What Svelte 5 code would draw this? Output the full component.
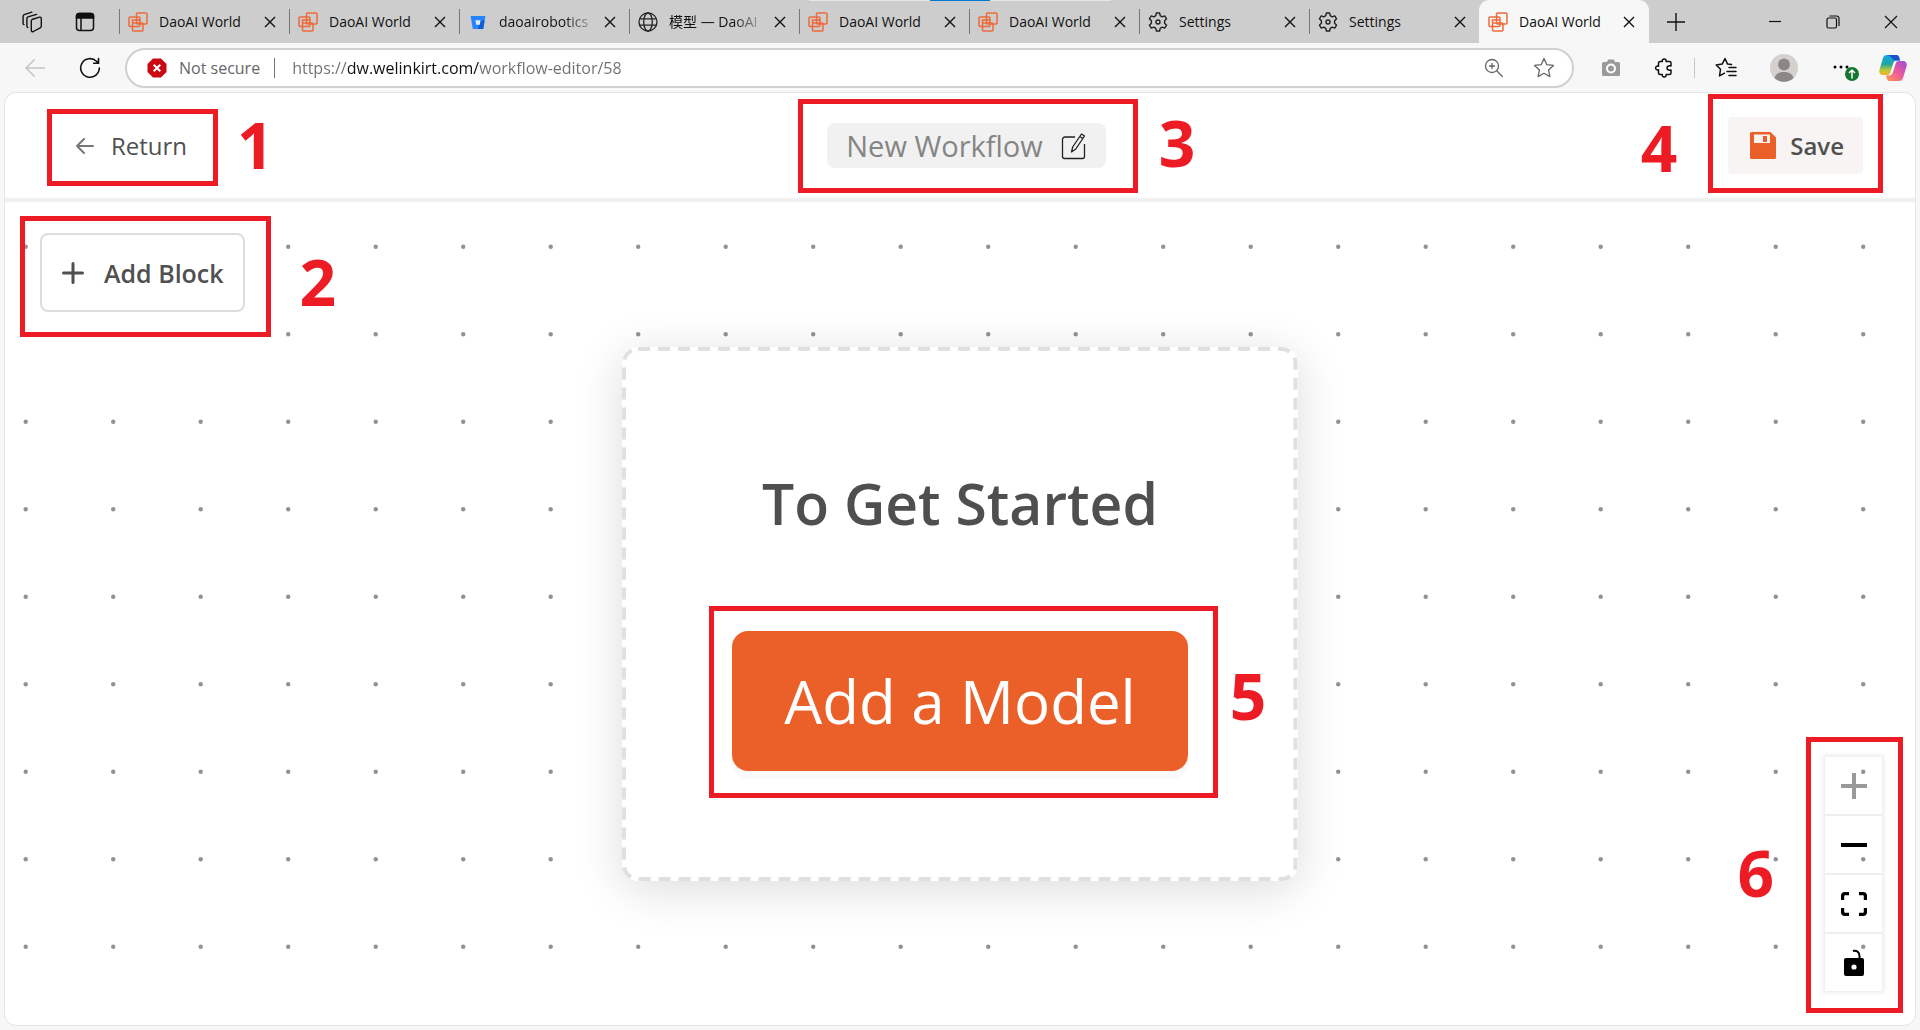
<script>
  const tabs = [
    { icon: 'dao', title: 'DaoAI World' },
    { icon: 'dao', title: 'DaoAI World' },
    { icon: 'bucket', title: 'daoairobotics', fade: true },
    { icon: 'globe', title: '模型 — DaoAI', fade: true },
    { icon: 'dao', title: 'DaoAI World' },
    { icon: 'dao', title: 'DaoAI World' },
    { icon: 'gear', title: 'Settings' },
    { icon: 'gear', title: 'Settings' },
    { icon: 'dao', title: 'DaoAI World', active: true }
  ];
  let url = $state('https://dw.welinkirt.com/workflow-editor/58');
</script>

{#snippet favicon(name)}
  {#if name === 'dao'}
    <svg class="fav" viewBox="0 0 20 20" fill="none" stroke="#ee6a3a" stroke-width="1.5">
      <rect x="1" y="5" width="11" height="9.5" rx="1" />
      <rect x="8.500" y="1" width="10.500" height="11" rx="1" />
      <rect x="4.500" y="11" width="10.500" height="8" rx="1" />
      <path d="M4.500 11V8h8" />
    </svg>
  {:else if name === 'bucket'}
    <svg class="fav" viewBox="0 0 20 20">
      <path d="M2.600 4h14.800l-2.200 13H4.800z" fill="#2684ff" />
      <path d="M12 8.500h4.600L15.200 17H10z" fill="#0f5bd8" />
      <path d="M7.400 8.200h5.200l-.8 4.600H8.200z" fill="#dfe9f8" />
    </svg>
  {:else if name === 'globe'}
    <svg class="fav" viewBox="0 0 20 20" fill="none" stroke="#222" stroke-width="1.3">
      <circle cx="10" cy="10" r="9" />
      <ellipse cx="10" cy="10" rx="4.300" ry="9" />
      <path d="M1.800 6.800h16.400M1.800 13.200h16.400" />
    </svg>
  {:else}
    <svg class="fav" viewBox="0 0 20 20" fill="none" stroke="#222" stroke-width="1.400" stroke-linejoin="round">
      <path d="M8.400 1h3.200l.6 2.700 1.900 1.100 2.600-.9 1.900 2.900-2 1.900v2.600l2 1.900-1.900 2.900-2.600-.9-1.900 1.100-.6 2.700H8.400l-.6-2.700-1.900-1.100-2.600.9-1.900-2.900 2-1.900V8.700l-2-1.900 1.900-2.900 2.600.9 1.900-1.100z" />
      <circle cx="10" cy="10" r="2" />
    </svg>
  {/if}
{/snippet}

{#snippet cross()}
  <svg width="12" height="12" viewBox="0 0 12 12" stroke="#111" stroke-width="1.400"><path d="M1 1l10 10M11 1L1 11" /></svg>
{/snippet}

<div class="browser">
  <div class="tabstrip">
    <div class="snapbar"><i></i></div>
    <div class="lead">
      <button class="ico" aria-label="Workspaces">
        <svg width="22" height="22" viewBox="0 0 22 22" fill="none" stroke="#111" stroke-width="1.400" stroke-linejoin="round" stroke-linecap="round">
          <path d="M11 8.500l7.500-2.300c1-.3 1.800.2 1.800 1.200v7.800c0 .8-.4 1.300-1.100 1.600l-6.900 3.700c-1 .5-2 0-2-1.100v-9.100c0-.9.2-1.500.7-1.800z" />
          <path d="M6.800 16.500c-.6-.1-.9-.5-.9-1.200V7.600c0-.8.400-1.400 1.100-1.700l8.600-2.500" />
          <path d="M3 13.600c-.6-.1-.9-.5-.9-1.200V5.400c0-.8.400-1.400 1.100-1.700l7.600-2.500" />
        </svg>
      </button>
      <button class="ico" aria-label="Tab actions menu">
        <svg width="20" height="20" viewBox="0 0 20 20" fill="none" stroke="#111" stroke-width="1.500">
          <rect x="1.500" y="1.500" width="17" height="17" rx="3" />
          <path d="M1.500 6V4a2.500 2.500 0 0 1 2.500-2.500h12A2.500 2.500 0 0 1 18.500 4v2z" fill="#111" />
          <path d="M6 6v12" />
        </svg>
      </button>
    </div>
    {#each tabs as tab}
      <div class="tab" class:active={tab.active}>
        <button class="tab-main">
          {@render favicon(tab.icon)}
          <span class="tab-title" class:fade={tab.fade}>{tab.title}</span>
        </button>
        <button class="ico close" aria-label="Close tab">{@render cross()}</button>
      </div>
    {/each}
    <button class="ico newtab" aria-label="New tab">
      <svg width="18" height="18" viewBox="0 0 18 18" stroke="#111" stroke-width="1.400"><path d="M9 0v18M0 9h18" /></svg>
    </button>
    <div class="winctl">
      <button class="ico" aria-label="Minimize">
        <svg width="14" height="14" viewBox="0 0 14 14" stroke="#111" stroke-width="1.200"><path d="M1 6.500h12" /></svg>
      </button>
      <button class="ico" aria-label="Restore">
        <svg width="14" height="14" viewBox="0 0 14 14" fill="none" stroke="#111" stroke-width="1.200">
          <rect x="1" y="3" width="9.500" height="10" rx="1.500" />
          <path d="M3.500 1h7a2.500 2.500 0 0 1 2.500 2.500V11" />
        </svg>
      </button>
      <button class="ico" aria-label="Close window">
        <svg width="14" height="14" viewBox="0 0 14 14" stroke="#111" stroke-width="1.200"><path d="M1 1l12 12M13 1L1 13" /></svg>
      </button>
    </div>
  </div>

  <div class="toolbar">
    <button class="ico" aria-label="Back">
      <svg width="22" height="20" viewBox="0 0 22 20" fill="none" stroke="#c4c4c4" stroke-width="1.500"><path d="M21 10H2M10.500 1.500L2 10l8.500 8.500" /></svg>
    </button>
    <button class="ico reload" aria-label="Refresh">
      <svg width="22" height="22" viewBox="0 0 22 22" fill="none" stroke="#111" stroke-width="1.600" stroke-linecap="round"><path d="M20.300 11a9.300 9.300 0 1 1-2.800-6.700l1.800 1.800M19.500 1.500v4.800h-4.800" /></svg>
    </button>
    <div class="omnibox">
      <button class="security">
        <svg width="20" height="20" viewBox="0 0 20 20">
          <path d="M6 .5h8L19.500 6v8L14 19.500H6L.5 14V6z" fill="#c90a12" />
          <path d="M6.700 6.700l6.600 6.600M13.300 6.700l-6.600 6.600" stroke="#fff" stroke-width="2" />
        </svg>
        Not secure
      </button>
      <input class="url" aria-label="Address" bind:value={url} />
      <button class="ico" aria-label="Zoom">
        <svg width="20" height="20" viewBox="0 0 20 20" fill="none" stroke="#666" stroke-width="1.300"><circle cx="8" cy="8" r="6.500" /><path d="M12.700 12.700l6 6M8 5v6M5 8h6" /></svg>
      </button>
      <button class="ico star" aria-label="Add to favorites">
        <svg width="22" height="22" viewBox="0 0 22 22" fill="none" stroke="#666" stroke-width="1.300" stroke-linejoin="round"><path d="M11 1.500l2.800 6.200 6.700.7-5 4.500 1.400 6.700L11 16.200l-5.900 3.400 1.400-6.700-5-4.500 6.700-.7z" /></svg>
      </button>
    </div>
    <div class="tools">
      <button class="ico" aria-label="Screenshot">
        <svg width="20" height="20" viewBox="0 0 20 20" fill="#9a9a9a">
          <path d="M7 1.500h6l1 2.500h3.500A1.500 1.500 0 0 1 19 5.500v11a1.500 1.500 0 0 1-1.500 1.500h-15A1.500 1.500 0 0 1 1 16.500v-11A1.500 1.500 0 0 1 2.500 4H6z" />
          <circle cx="10" cy="10.500" r="4" fill="none" stroke="#fff" stroke-width="2" />
        </svg>
      </button>
      <button class="ico wide" aria-label="Extensions">
        <svg width="20" height="20" viewBox="0 0 20 20" fill="none" stroke="#111" stroke-width="1.500" stroke-linejoin="round">
          <path d="M6 3.500h2.300C8 2 8.800 1 10.200 1s2.200 1 1.900 2.500h3.400c.9 0 1.500.6 1.500 1.500v3c-2.800-.5-4 .5-4 2s1.200 2.500 4 2v3c0 .9-.6 1.500-1.500 1.500h-3.400c.3 1.500-.5 2.500-1.900 2.500s-2.200-1-1.900-2.500H6c-.9 0-1.500-.6-1.500-1.500v-3.200c-1.600.4-2.900-.4-2.900-1.800s1.300-2.200 2.900-1.800V5c0-.9.600-1.500 1.500-1.500z" />
        </svg>
      </button>
      <span class="bar"></span>
      <button class="ico" aria-label="Favorites">
        <svg width="22" height="22" viewBox="0 0 22 22" fill="none" stroke="#111" stroke-width="1.500" stroke-linejoin="round" stroke-linecap="round">
          <path d="M16.500 7.600l-3.900-.5L10 1.500 7.200 7.100l-6 .9 4.300 4.300-1 6.600 5-2.700M14 10.500h7M12 14.500h9M14 18.500h7" />
        </svg>
      </button>
      <button class="ico wide" aria-label="Profile">
        <svg width="28" height="28" viewBox="0 0 28 28">
          <circle cx="14" cy="14" r="14" fill="#d5d1ce" />
          <circle cx="14" cy="10.500" r="6" fill="#8d8885" />
          <path d="M4.500 24c1-4 4.500-6 9.500-6s8.500 2 9.500 6a14 14 0 0 1-19 0z" fill="#8d8885" />
        </svg>
      </button>
      <button class="ico wide" aria-label="Settings and more">
        <svg width="28" height="28" viewBox="0 0 28 28">
          <circle cx="4" cy="13" r="1.500" /><circle cx="10" cy="13" r="1.500" /><circle cx="16" cy="13" r="1.500" />
          <circle cx="21" cy="20" r="7" fill="#12762f" />
          <path d="M21 24.500v-8M18 19l3-3 3 3" fill="none" stroke="#fff" stroke-width="1.500" />
        </svg>
      </button>
      <button class="ico" aria-label="Copilot">
        <svg width="28" height="28" viewBox="0 0 28 28">
          <defs>
            <linearGradient id="cpA" x1="0" y1="0" x2="0" y2="1">
              <stop offset="0" stop-color="#12a5e8" /><stop offset=".45" stop-color="#1fa6a0" /><stop offset=".75" stop-color="#b7c83a" /><stop offset="1" stop-color="#f3b51f" />
            </linearGradient>
            <linearGradient id="cpB" x1="1" y1="0" x2="0" y2="1">
              <stop offset="0" stop-color="#9a4be0" /><stop offset=".5" stop-color="#ee5a9c" /><stop offset="1" stop-color="#fb9a4a" />
            </linearGradient>
          </defs>
          <path d="M8 1h9c2 0 2.700 1 3.200 2.600L21 6.500h-3c-2.200 0-3.200 1-3.900 3.200L11.500 18c-.6 2-1.400 3-3.500 3H4c-3 0-4.300-2.500-3.500-5.500L4 4c.7-2 1.800-3 4-3z" fill="url(#cpA)" />
          <path d="M9 1h8c2 0 2.700 1 3.200 2.600L21 6.500h-4.500C14 6.500 13 3 9 1z" fill="#1d4fd0" />
          <path d="M20 27h-9c-2 0-2.700-1-3.200-2.600L7 21.500h3c2.200 0 3.200-1 3.900-3.200L16.500 10c.6-2 1.400-3 3.500-3h4c3 0 4.300 2.500 3.500 5.500L24 24c-.7 2-1.800 3-4 3z" fill="url(#cpB)" />
        </svg>
      </button>
    </div>
  </div>

  <main class="page">
    <header class="head">
      <div class="spot">
        <a class="return" href="#back">
          <svg width="20" height="18" viewBox="0 0 20 18" fill="none" stroke="#777" stroke-width="2" stroke-linecap="round" stroke-linejoin="round"><path d="M18 9H2M9 2L2 9l7 7" /></svg>
          Return
        </a>
        <div class="mark m1"><b>1</b></div>
      </div>
      <div class="spot">
        <button class="name">
          New Workflow
          <svg width="26" height="28" viewBox="0 0 26 28" fill="none" stroke="#222" stroke-width="1.300" stroke-linejoin="round">
            <path d="M14 5H4a2.500 2.500 0 0 0-2.500 2.500v17A2 2 0 0 0 3.500 26.500h18a2 2 0 0 0 2-2V12" />
            <path d="M10.500 20l1.200-5L20.500 2l3 2L14.800 17z M18.800 4.500l3 2" />
          </svg>
        </button>
        <div class="mark m3"><b>3</b></div>
      </div>
      <div class="spot end">
        <button class="save">
          <svg width="26" height="27" viewBox="0 0 26 27">
            <path d="M1.500 0h19L26 5.500v20a1.500 1.500 0 0 1-1.500 1.500h-23A1.500 1.500 0 0 1 0 25.500v-24A1.500 1.500 0 0 1 1.500 0z" fill="#eb5f28" />
            <path d="M4 2.500h16v8.500H4z" fill="#f8f4f3" />
            <path d="M13 4h4v6h-4z" fill="#eb5f28" />
          </svg>
          Save
        </button>
        <div class="mark m4"><b>4</b></div>
      </div>
    </header>

    <section class="canvas">
      <div class="spot addspot">
        <button class="addblock">
          <svg width="22" height="22" viewBox="0 0 22 22" stroke="#4f4f4f" stroke-width="3" stroke-linecap="round"><path d="M11 1.500v19M1.500 11h19" /></svg>
          Add Block
        </button>
        <div class="mark m2"><b>2</b></div>
      </div>

      <div class="card">
        <svg class="outline" width="100%" height="100%" aria-hidden="true"><rect x="2" y="2" rx="14" /></svg>
        <h1>To Get Started</h1>
        <div class="spot">
          <button class="model">Add a Model</button>
          <div class="mark m5"><b>5</b></div>
        </div>
      </div>

      <div class="spot ctlspot">
        <div class="controls">
          <button aria-label="Zoom in" disabled>
            <svg width="26" height="26" viewBox="0 0 26 26" stroke="#999" stroke-width="4"><path d="M13 0v26M0 13h26" /></svg>
          </button>
          <button aria-label="Zoom out">
            <svg width="26" height="26" viewBox="0 0 26 26" stroke="#000" stroke-width="4"><path d="M0 13h26" /></svg>
          </button>
          <button aria-label="Fit view">
            <svg width="26" height="24" viewBox="0 0 26 24" fill="none" stroke="#000" stroke-width="3.200"><path d="M1.600 8V4a2.400 2.400 0 0 1 2.400-2.400h4M18 1.600h4A2.400 2.400 0 0 1 24.400 4v4M24.400 16v4a2.400 2.400 0 0 1-2.400 2.400h-4M8 22.400H4A2.400 2.400 0 0 1 1.600 20v-4" /></svg>
          </button>
          <button aria-label="Toggle interactivity">
            <svg width="20" height="28" viewBox="0 0 20 28">
              <path d="M9 2c4-1 6.500 1.500 6.500 5v3" fill="none" stroke="#000" stroke-width="2" />
              <path d="M2 9h16a2 2 0 0 1 2 2v14a2 2 0 0 1-2 2H2a2 2 0 0 1-2-2V11a2 2 0 0 1 2-2z" />
              <circle cx="10" cy="18" r="2.600" fill="#fff" />
            </svg>
          </button>
        </div>
        <div class="mark m6"><b>6</b></div>
      </div>

      <svg class="dots" width="100%" height="100%" aria-hidden="true">
        <defs>
          <pattern id="grid" x="-23" y="1" width="175" height="175" patternUnits="userSpaceOnUse">
            <g fill="#91919a">
              <circle cx="43.700" cy="43.700" r="2.200" /><circle cx="131.200" cy="43.700" r="2.200" />
              <circle cx="43.700" cy="131.200" r="2.200" /><circle cx="131.200" cy="131.200" r="2.200" />
            </g>
          </pattern>
        </defs>
        <rect width="100%" height="100%" fill="url(#grid)" />
      </svg>
    </section>
  </main>
</div>

<style>
  :global(body) { margin: 0; background: #f7f7f7; }
  .browser {
    display: flex; flex-direction: column; min-height: 100vh; box-sizing: border-box; padding-bottom: 4px;
    font-family: "Open Sans", "Noto Sans CJK SC", sans-serif; color: #505050;
  }
  .browser :global(*) { box-sizing: border-box; }
  button { font: inherit; color: inherit; background: none; border: 0; padding: 0; margin: 0; }
  svg { display: block; flex: none; }
  .ico { display: grid; place-items: center; flex: none; }

  .tabstrip { position: relative; display: flex; height: 43px; background: #cdcdcd; }
  .snapbar { position: absolute; top: 0; left: 50%; width: 302px; height: 1px; margin-left: -151px; background: #e6e6e6; }
  .snapbar i { display: block; width: 60px; height: 1px; margin: 0 auto; background: #0078d4; }
  .lead { display: flex; flex: none; width: 119px; padding-left: 21px; gap: 32px; }
  .tab { display: flex; flex: 0 1 170px; min-width: 0; align-items: center; position: relative; padding-right: 13px; }
  .tab::before { content: ""; position: absolute; left: 0; top: 9px; height: 25px; width: 1px; background: #777; }
  .tab.active { background: #f7f7f7; border-radius: 10px 10px 0 0; padding-right: 14px; }
  .tab.active::before { display: none; }
  .tab-main { display: flex; align-items: center; flex: 1; min-width: 0; height: 100%; padding-left: 9px; gap: 11px; color: #111; font-size: 14px; line-height: 20px; }
  .fav { width: 20px; height: 20px; }
  .tab-title { text-align: left; white-space: nowrap; }
  .fade { mask-image: linear-gradient(to right, #000 calc(100% - 24px), rgba(0, 0, 0, .3)); }
  .close { width: 12px; height: 20px; }
  .newtab { width: 54px; }
  .winctl { display: flex; margin-left: auto; padding-right: 22px; gap: 44px; }

  .toolbar { display: flex; align-items: center; height: 49px; padding: 0 13px 0 24px; flex: none; }
  .reload { margin: 0 24px 0 33px; }
  .omnibox { display: flex; flex: 1; min-width: 0; align-items: center; height: 40px; padding: 0 17px 0 20px; background: #fff; border: 2px solid #d0d0d0; border-radius: 20px; font-size: 16px; }
  .security { display: flex; align-items: center; gap: 12px; color: #666; padding-right: 14px; border-right: 1px solid #777; line-height: 20px; white-space: nowrap; }
  .url {
    flex: 1; min-width: 0; border: 0; outline: 0; padding: 0; margin-left: 17px; font: inherit;
    color: transparent; background: linear-gradient(to right, #707070 56px, #111 56px 187px, #707070 187px); background-clip: text;
  }
  .star { margin-left: 29px; }
  .tools { display: flex; align-items: center; gap: 20px; flex: none; padding-left: 27px; }
  .wide { margin-left: 13px; }
  .bar { width: 1px; height: 20px; background: #c8c8c8; }

  .page { display: flex; flex-direction: column; flex: 1; margin: 0 4px; background: #fff; border: 1px solid #e4e4e4; border-radius: 12px; }
  .head { display: grid; grid-template-columns: 1fr auto 1fr; align-items: center; height: 109px; padding: 0 52px 0 65px; border-bottom: 4px solid #f1f1f1; }
  .spot { position: relative; justify-self: start; z-index: 3; }
  .end { justify-self: end; }
  .return { display: flex; align-items: center; gap: 16px; height: 57px; padding: 0 5px; font-size: 24px; color: #505050; text-decoration: none; }
  .name { display: flex; align-items: center; gap: 18px; height: 45px; padding: 0 19px; background: #f1f1f1; border-radius: 8px; font-size: 29px; line-height: 44px; color: #858585; }
  .save { display: flex; align-items: center; gap: 14px; height: 57px; padding: 0 19px 0 22px; background: #f8f4f3; border-radius: 4px; font-size: 24px; font-weight: 600; }

  .canvas { position: relative; display: grid; place-items: center; flex: 1; padding: 40px; }
  .addspot { position: absolute; left: 35px; top: 31px; }
  .addblock { display: flex; align-items: center; gap: 20px; height: 79px; padding: 0 19px 0 20px; border: 2px solid #ddd; border-radius: 8px; background: #fff; font-size: 25px; font-weight: 600; white-space: nowrap; }
  .card {
    position: relative; z-index: 2; display: flex; flex-direction: column; align-items: center; gap: 88px;
    padding: 116px 110px 110px; background: #fff; border-radius: 16px;
    box-shadow: 0 8px 48px rgba(0, 0, 0, .14);
  }
  .outline { position: absolute; inset: 0; pointer-events: none; }
  .outline rect { width: calc(100% - 4px); height: calc(100% - 4px); fill: none; stroke: #e0e0e0; stroke-width: 4px; stroke-dasharray: 12 8; }
  h1 { margin: 0; font-size: 57px; line-height: 80px; font-weight: 600; color: #4f4f4f; white-space: nowrap; }
  .model { height: 140px; padding: 0 52px; background: #eb5f28; color: #fff; border-radius: 16px; font-size: 60px; line-height: 80px; white-space: nowrap; box-shadow: 0 8px 0 #fafafa; }
  .ctlspot { position: absolute; right: 33px; bottom: 34px; z-index: auto; }
  .controls { display: flex; flex-direction: column; gap: 2px; background: #eee; box-shadow: 0 0 4px 2px rgba(0, 0, 0, .08); }
  .controls button { display: grid; place-items: center; width: 57px; height: 57px; background: #fff; }
  .dots { position: absolute; inset: 0; z-index: 1; pointer-events: none; }

  .mark { position: absolute; border: 5px solid #ed1c24; pointer-events: none; }
  .mark b { position: absolute; color: #ed1c24; font-size: 64px; line-height: 64px; }
  .m1 { inset: -8px -26px -12px -23px; }
  .m1 b { left: calc(100% + 24px); top: -1px; }
  .m2 { inset: -17px -26px -25px -20px; }
  .m2 b { left: calc(100% + 34px); top: 29px; }
  .m3 { inset: -24px -32px -25px -29px; }
  .m3 b { left: calc(100% + 26px); top: 7px; }
  .m4 { inset: -23px -20px -19px -20px; }
  .m4 b { right: calc(100% + 36px); top: 17px; }
  .m5 { inset: -25px -30px -27px -23px; }
  .m5 b { left: calc(100% + 17px); top: 53px; }
  .m6 { inset: -20px -21px -22px -19px; }
  .m6 b { right: calc(100% + 37px); top: 99px; }
</style>
